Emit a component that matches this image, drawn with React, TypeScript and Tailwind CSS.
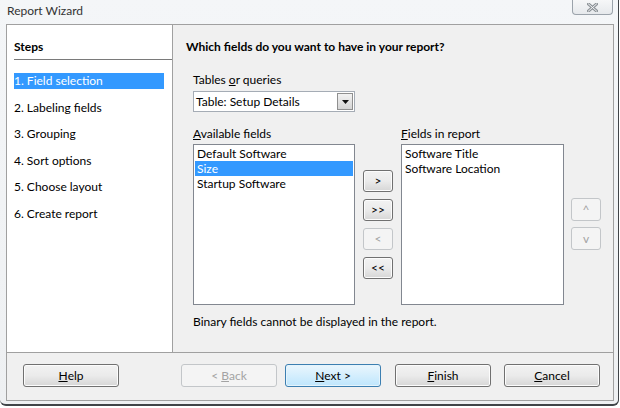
const font = { fontFamily: 'Lato, "Noto Sans", Arial, sans-serif' }

function WinButton({ children, disabled, primary, className = '' }: {
  children: React.ReactNode; disabled?: boolean; primary?: boolean; className?: string
}) {
  const base = 'flex items-center justify-center rounded-[3px] border text-[12px] leading-none'
  const look = disabled
    ? 'border-[#c3c6c9] bg-[#f4f4f4] text-[#a3a3a3]'
    : primary
      ? 'border-[#3c7fb1] bg-gradient-to-b from-[#eaf6fd] to-[#bee6fd] text-black shadow-[inset_0_0_0_1px_#e5f4fc]'
      : 'border-[#707070] bg-gradient-to-b from-[#f2f2f2] via-[#ebebeb] to-[#d6d6d6] text-black shadow-[inset_0_0_0_1px_#fcfcfc]'
  return <div className={`${base} ${look} ${className}`}>{children}</div>
}

function ListBox({ items, selected }: { items: string[]; selected?: number }) {
  return (
    <div className="h-[161px] border border-[#828790] bg-white pt-[1px] px-[1px]">
      {items.map((it, i) => (
        <div
          key={it}
          className={`h-[15px] pl-[2px] text-[12px] leading-[15px] ${i === selected ? 'bg-[#3399ff] text-white' : 'text-black'}`}
        >
          {it}
        </div>
      ))}
    </div>
  )
}

const steps = [
  '1. Field selection',
  '2. Labeling fields',
  '3. Grouping',
  '4. Sort options',
  '5. Choose layout',
  '6. Create report',
]

export default function App() {
  return (
    <div style={font} className="w-[620px] h-[408px] bg-white overflow-hidden">
      <div className="w-[619px] h-[406px] bg-gradient-to-b from-[#f4f6f8] to-[#eef0f2] border-r border-b-2 border-[#404448] rounded-b-[6px] flex flex-col">
        {/* title bar */}
        <div className="h-[24px] flex items-start">
          <div className="pl-[7px] pt-[3px] text-[12px] leading-[16px] text-[#333]">Report Wizard</div>
          <div className="ml-auto mr-[5px] w-[41px] h-[15px] border border-t-0 border-[#9ba3ab] rounded-b-[4px] bg-gradient-to-b from-[#f6f7f8] to-[#e6e9ec] flex items-center justify-center">
            <svg width="11" height="9" viewBox="0 0 11 9">
              <path d="M1.5 1 L9.5 8 M9.5 1 L1.5 8" stroke="#8d9398" strokeWidth="3" strokeLinecap="square" />
              <path d="M1.5 1 L9.5 8 M9.5 1 L1.5 8" stroke="#f4f5f6" strokeWidth="1" strokeLinecap="square" />
            </svg>
          </div>
        </div>

        {/* frame */}
        <div className="ml-[6px] w-[608px] h-[377px] border border-[#a0a0a0] flex flex-col">
          <div className="h-[328px] flex border-b border-[#a0a0a0]">
            {/* steps */}
            <div className="w-[166px] bg-white border-r border-[#a0a0a0] pl-[7px]">
              <div className="pt-[14px] text-[12px] font-bold leading-[16px] text-black">Steps</div>
              <div className="mt-[4px] h-[1px] bg-[#7a7a7a]" />
              <div className="mt-[13px] flex flex-col">
                {steps.map((s, i) => (
                  <div
                    key={s}
                    className={`w-[150px] h-[16px] mb-[10.6px] text-[12px] leading-[16px] ${i === 0 ? 'bg-[#3399ff] text-white' : 'text-black'}`}
                  >
                    {s}
                  </div>
                ))}
              </div>
            </div>

            {/* content */}
            <div className="flex-1 bg-[#f0f0f0]">
              <div className="pl-[13px] pt-[14px] text-[12px] font-bold leading-[16px] text-black">
                Which fields do you want to have in your report?
              </div>
              <div className="pl-[20px]">
                <div className="mt-[17px] text-[12px] leading-[16px] text-black">
                  Tables <span className="underline">o</span>r queries
                </div>
                <div className="mt-[3px] w-[162px] h-[21px] border border-[#a5acb5] bg-white flex items-center">
                  <span className="pl-[2px] text-[12px] leading-none text-black flex-1">Table: Setup Details</span>
                  <div className="w-[16px] h-[17px] mr-[1px] border border-[#8f8f8f] bg-gradient-to-b from-[#f2f2f2] to-[#d5d5d5] flex items-center justify-center">
                    <svg width="7" height="4" viewBox="0 0 7 4"><path d="M0 0 H7 L3.5 4 Z" fill="#111" /></svg>
                  </div>
                </div>

                <div className="mt-[14px] flex">
                  <div className="w-[162px]">
                    <div className="text-[12px] leading-[16px] text-black"><span className="underline">A</span>vailable fields</div>
                    <div className="mt-[2px]">
                      <ListBox items={['Default Software', 'Size', 'Startup Software']} selected={1} />
                    </div>
                  </div>
                  <div className="ml-[8px] w-[30px] pt-[44px] flex flex-col gap-[7px]">
                    <WinButton className="h-[22px]">&gt;</WinButton>
                    <WinButton className="h-[22px]">&gt;&gt;</WinButton>
                    <WinButton className="h-[22px]" disabled>&lt;</WinButton>
                    <WinButton className="h-[22px]">&lt;&lt;</WinButton>
                  </div>
                  <div className="ml-[8px] w-[163px]">
                    <div className="text-[12px] leading-[16px] text-black"><span className="underline">F</span>ields in report</div>
                    <div className="mt-[2px]">
                      <ListBox items={['Software Title', 'Software Location']} />
                    </div>
                  </div>
                  <div className="ml-[7px] w-[30px] pt-[72px] flex flex-col gap-[6px]">
                    <WinButton className="h-[23px]" disabled>^</WinButton>
                    <WinButton className="h-[23px] text-[11px]" disabled>v</WinButton>
                  </div>
                </div>

                <div className="mt-[9px] text-[12px] leading-[16px] text-black">
                  Binary fields cannot be displayed in the report.
                </div>
              </div>
            </div>
          </div>

          {/* bottom buttons */}
          <div className="flex-1 bg-[#f0f0f0] flex items-start pt-[11px] pl-[16px]">
            <WinButton className="w-[96px] h-[23px]"><span className="underline">H</span>elp</WinButton>
            <WinButton className="ml-[62px] w-[96px] h-[23px]" disabled>&lt; <span className="underline ml-[3px]">B</span>ack</WinButton>
            <WinButton className="ml-[8px] w-[96px] h-[23px]" primary><span className="underline">N</span>ext &gt;</WinButton>
            <WinButton className="ml-[14px] w-[96px] h-[23px]"><span className="underline">F</span>inish</WinButton>
            <WinButton className="ml-[13px] w-[96px] h-[23px]"><span className="underline">C</span>ancel</WinButton>
          </div>
        </div>
      </div>
    </div>
  )
}
